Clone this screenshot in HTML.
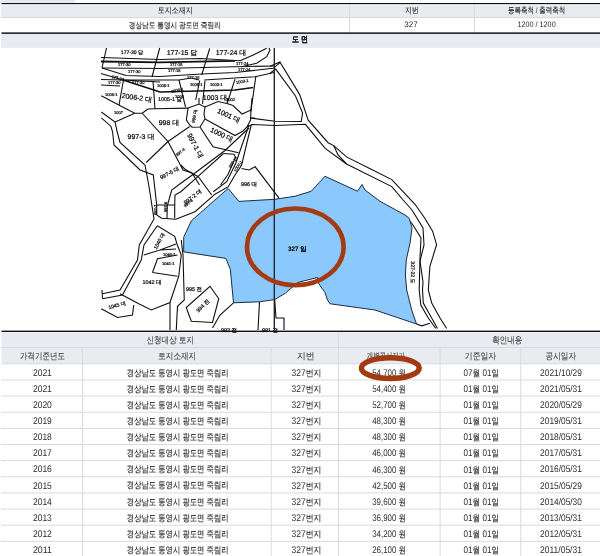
<!DOCTYPE html>
<html><head><meta charset="utf-8">
<style>
html,body{margin:0;padding:0;background:#fff;width:600px;height:556px;overflow:hidden;position:relative}
svg{position:absolute;left:0;top:0;font-family:"Liberation Sans",sans-serif;filter:blur(0.3px);text-rendering:geometricPrecision}
</style></head><body>
<svg width="600" height="556" viewBox="0 0 600 556">
<rect x="0" y="0" width="75" height="3" fill="#e7eaee"/>
<rect x="1.5" y="3.0" width="599" height="1.5" fill="#101114"/>
<rect x="1" y="4.5" width="599" height="13" fill="#e8ebef"/>
<rect x="1" y="4.5" width="599" height="1" fill="#f3f4f6"/>
<rect x="1" y="17" width="599" height="1" fill="#d7dadd"/>
<rect x="349" y="4.5" width="1" height="28" fill="#d9dbde"/>
<rect x="474" y="4.5" width="1" height="28" fill="#d9dbde"/>
<rect x="1.5" y="32.3" width="599" height="1.7" fill="#2e3034"/>
<rect x="1" y="34" width="599" height="13.8" fill="#e8ebef"/>
<rect x="1.5" y="330.6" width="599" height="1.4" fill="#101114"/>
<rect x="1.5" y="332" width="599" height="31.8" fill="#e8ebef"/>
<rect x="1.5" y="332" width="599" height="1" fill="#f1f2f5"/>
<rect x="1" y="347" width="599" height="1" fill="#d7dadd"/>
<rect x="1" y="363.3" width="599" height="1" fill="#d7dadd"/>
<rect x="1" y="379.44" width="599" height="1" fill="#d7dadd"/>
<rect x="1" y="395.58" width="599" height="1" fill="#d7dadd"/>
<rect x="1" y="411.72" width="599" height="1" fill="#d7dadd"/>
<rect x="1" y="427.86" width="599" height="1" fill="#d7dadd"/>
<rect x="1" y="444.0" width="599" height="1" fill="#d7dadd"/>
<rect x="1" y="460.14" width="599" height="1" fill="#d7dadd"/>
<rect x="1" y="476.28" width="599" height="1" fill="#d7dadd"/>
<rect x="1" y="492.42" width="599" height="1" fill="#d7dadd"/>
<rect x="1" y="508.56" width="599" height="1" fill="#d7dadd"/>
<rect x="1" y="524.7" width="599" height="1" fill="#d7dadd"/>
<rect x="1" y="540.84" width="599" height="1" fill="#d7dadd"/>
<rect x="338" y="331.9" width="1" height="224.1" fill="#d9dbde"/>
<rect x="82.1" y="347.5" width="1" height="208.5" fill="#d9dbde"/>
<rect x="270.6" y="347.5" width="1" height="208.5" fill="#d9dbde"/>
<rect x="439.6" y="347.5" width="1" height="208.5" fill="#d9dbde"/>
<rect x="520.3" y="347.5" width="1" height="208.5" fill="#d9dbde"/>
<g fill="none" stroke="#101010" stroke-width="1.1">
<!-- top road band -->
<path d="M106.5,48 L102,68"/>
<path d="M159.7,48 L152,77"/>
<path d="M209.7,48.5 L201.7,75"/>
<path d="M101,57.5 L160,59.5 L200,58.5 L240,60.8 L253.3,55 L266.7,48.3"/>
<path d="M101,61.5 L160,62.3 L235,60.8" stroke-width="1.8"/>
<path d="M102,68 L160,68.5 L235,66.7 L275,66"/>
<path d="M241.7,66.7 L256.7,63.3 L266.7,56.7 L270,50 L269,48"/>
<path d="M102,68 L126,75.5 L160,76.5 L201.7,74 L235,72.5 L273.3,68.3 L280,62.5"/>
<path d="M101,73.5 L123,80 L160,82"/>
<path d="M101,79.5 L123,80 L155,80 L179,80 L191,78 L199,80"/>
<path d="M204.3,80 L235,78 L255,76.7 L274.2,72.5"/>
<path d="M101,85 L120,86"/>
<path d="M123,80 L160,92 L235,90 L253.3,87.5" stroke-width="1.6"/>
<path d="M123.5,80 L119,105"/>
<path d="M153,81 L155,109"/>
<path d="M179,80 L185.5,107"/>
<path d="M199.7,80.7 L195.7,100"/>
<path d="M205,80.7 L202.5,104"/>
<path d="M235,79.2 L227.5,102.5"/>
<path d="M255.8,76.7 L250.8,111.7"/>
<!-- lots below road -->
<path d="M101.3,95.75 L118.8,104.9 L134.7,113.25 L142.2,113.25 L148,109"/>
<path d="M148,109 L155,108.75 L188.1,108.1"/>
<!-- 999 lot -->
<!-- 1001 lot -->
<!-- 997 lots -->
<path d="M115.1,122 L134.7,113.25"/>
<!-- 999 -->
<path d="M188.1,108.1 L199,104 L205,107 L204,114 L205,119 L200,127 L192,127.2 L189.7,125 L186.3,119.8 Z M199,98 L199,104"/>
<!-- 1001 -->
<path d="M205,107 L218,101.5 L227,103.5 L233,105.5 L242,114 L251,110 L250.5,120 L247,127 L243,131 L235,135.5 L205,119"/>
<path d="M227,103.5 L228,98 M251,110 L252,98 M250.5,118 L255,118"/>
<!-- 998/997 -->
<path d="M142.2,113.25 L168,141.5 L189.7,126.5"/>
<path d="M168,141.5 L146.25,162.5"/>
<path d="M168,141.5 L183,170 L192,173 L199.5,185"/>
<path d="M200,127 L213,146.8 L238.5,152.7"/>
<!-- diagonal road -->
<path d="M249,128 L225,150.5 L193.3,174.2 L180.8,183.3 L171.7,190 L167.5,205"/>
<path d="M223.5,153.5 L195,179.2 L180.8,191.7 L175,195 L174.7,205"/>
<path d="M223.5,153.5 L234,154.3 L235.5,157.3 L228,174.5 L220.5,185"/>
<!-- narrow road -->
<path d="M249,125 L235.5,164 L233.3,168.3 L226.7,181.7 L213.3,191.7"/>
<path d="M251.2,125 L241.5,165.5 L235,175 L228.3,186.7 L215,194.2 L195,211.7 L175.8,219.2 L161.7,218.3 L156.7,215"/>
<path d="M180.8,165 L185,169.2 L195,175 L198.3,176.7 L211.7,195"/>
<path d="M241.5,168.5 L249,170 L255.2,166.8 L279,198.2"/>
<!-- left road (upper) -->
<path d="M101.3,112 L115.1,122 L117.2,132 L120,142.5 L145,165 L148.75,185 L154,219 L139.3,245 L137.5,260 L120,290 L102.5,293.75"/>
<path d="M101.3,117.8 L110.9,126.2 L112.6,132 L114,145 L140,170 L153.3,175 L156.7,205 L156.7,215"/>
<path d="M157.3,225.7 L144,245 L141.25,260 L122.5,295 L102.5,298.75"/>
<path d="M102,290 L102.5,298.75"/>
<path d="M157.3,225.7 L174.7,236.3 L177.3,245 L181.25,255"/>
<!-- small lots -->
<path d="M156.7,205 L174.7,205 L174.7,218.3 M167.3,205 L167,218.5"/>
<!-- diagonal road through 997-1 -->
<!-- 1042 / 1040 lots -->
<path d="M120,293.75 L138.75,303.75 L151.25,310 L170,302.5 L178.75,276.25 L181.25,255"/>
<path d="M152.5,272.5 L177.5,276.25 M152.5,272.5 L157.5,258.75 L177.5,255"/>
<path d="M143.75,255 L160,250 L176,249 M160,250 L176,244"/>
<path d="M181.25,240 L183,255 L184.25,300 L177.5,306.25 L176.25,330"/>
<path d="M101.25,308.75 L117.5,317.5 L132.5,315 L133.75,305"/>
<path d="M170,302.5 L170,330"/>
<!-- 994 / 995 -->
<path d="M186.25,307.5 L210,286.25 L218.75,298.75 L212.5,322.5 L191.25,321.25 Z"/>
<path d="M233.5,302.8 L220,315 L212.5,328"/>
<path d="M259.5,301.8 L258,330"/>
<path d="M274.7,299.6 L276,318 L284,318 L284,330"/>
<!-- right road top -->
<path d="M270,66.2 L279.9,62 L299.7,94.6 L308.2,120.1 L328.1,142.7 L333.7,145.6 L346.5,156.9 L369.2,168.2 L391.8,179.6 L415,204.3 L424.5,217.7 L432.6,231.2 L436.6,244.7 L429.9,266.3 L428.3,290 L431.7,303 L440,318 L446.7,328.5"/>
<path d="M270,73.3 L275.7,69.1 L295.5,96 L302.6,113 L301.2,121.5 L275,121.3 L250.5,118"/>
<path d="M247,127 L252,124.5 L275,125.5 L305.4,124.3 L325.2,148.4 L346.5,164 L391.8,186.6 L403.1,200 L412,210 L423,228 L424,245 L420,261 L423,282 L422.5,290 L423.3,303 L430,315 L437.5,328.5"/>
<path d="M333.7,145.6 L338,155 L346.5,164"/>
<path d="M416.5,324 L421.7,325.8 L430,323.3"/>
<path d="M405,215 L413,225 L421,238 L420,258 L419.2,290 L420.8,305 L428.3,318 L435.8,328.5"/>
</g>
<g font-family="Liberation Sans, sans-serif" font-weight="normal" fill="#0a0a0a" stroke="#0a0a0a" stroke-width="0.22" font-size="5.46">
<text x="132" y="54" text-anchor="middle" font-size="5.10">177-30 답</text>
<text x="182" y="54.5" text-anchor="middle" font-size="6.99">177-15 답</text>
<text x="231" y="54.5" text-anchor="middle" font-size="6.99">177-24 대</text>
<text x="137" y="100" text-anchor="middle" font-size="6.99" transform="rotate(8 137 97)">2006-2 대</text>
<text x="170" y="101" text-anchor="middle" font-size="5.46">1005-1 답</text>
<text x="215" y="100" text-anchor="middle" font-size="6.99">1003 대</text>
<text x="229" y="118" text-anchor="middle" font-size="6.99" transform="rotate(25 229 115)">1001 대</text>
<text x="169" y="125" text-anchor="middle" font-size="6.99">998 대</text>
<text x="141" y="139" text-anchor="middle" font-size="6.99">997-3 대</text>
<text x="195" y="148" text-anchor="middle" font-size="6.99" transform="rotate(62 195 146)">997-1 대</text>
<text x="222" y="137" text-anchor="middle" font-size="6.99" transform="rotate(25 222 134)">1000 대</text>
<text x="194" y="118" text-anchor="middle" font-size="4.50" transform="rotate(-80 194 116)">999 대</text>
<text x="169" y="175" text-anchor="middle" font-size="5.46" transform="rotate(-28 169 172)">997-5 대</text>
<text x="249" y="186" text-anchor="middle" font-size="5.46">996 대</text>
<text x="192" y="199" text-anchor="middle" font-size="5.46" transform="rotate(-38 192 196)">997-2 대</text>
<text x="159" y="243" text-anchor="middle" font-size="5.10" transform="rotate(-62 159 241)">1040 대</text>
<text x="152" y="284" text-anchor="middle" font-size="5.46">1042 대</text>
<text x="117" y="307" text-anchor="middle" font-size="5.10" transform="rotate(-15 117 305)">1045 대</text>
<text x="194" y="291" text-anchor="middle" font-size="5.46">995 전</text>
<text x="202" y="308" text-anchor="middle" font-size="5.46" transform="rotate(-45 202 305)">994 전</text>
<text x="297" y="251.5" text-anchor="middle" font-size="6.55">327 임</text>
<text x="414.5" y="273" text-anchor="middle" font-size="5.10" transform="rotate(90 413 271)">327-22 도</text>
<text x="229" y="332" text-anchor="middle" font-size="5.46">993 전</text>
<text x="270" y="332" text-anchor="middle" font-size="5.46">991 전</text>
<g font-size="4.05">
<text x="118" y="66">177-30</text><text x="170" y="65.5">177-15</text><text x="236" y="65">177-24</text>
<text x="128" y="72.5">177-30</text><text x="168" y="72">177-15</text><text x="238" y="71">177-24</text>
<text x="112" y="78" transform="rotate(15 112 76)">177-30</text><text x="187" y="79">177-15</text>
<text x="108" y="83.5">177-30</text><text x="132" y="84">177-30</text><text x="157" y="87">1005-1</text>
<text x="190" y="86">1005-1</text><text x="236" y="84" transform="rotate(-10 236 82)">1003-1</text>
<text x="105" y="96">1006-1</text><text x="171" y="93" transform="rotate(-12 171 91)">1006-1</text>
<text x="210" y="86">1003-1</text><text x="226" y="101">1002</text><text x="175" y="98">1005</text>
<text x="114" y="113.5">1007</text>
<text x="176" y="157" transform="rotate(-40 176 155)">997-4</text>
<text x="184" y="208" transform="rotate(-40 184 206)">997-6</text>
<text x="157" y="215" transform="rotate(-90 157 215)">997-7</text>
<text x="167" y="212" transform="rotate(-90 167 212)">997-8</text>
<text x="163" y="256">1040-1</text><text x="162" y="265">1041-1</text>
<text x="234" y="173" transform="rotate(-55 234 171)">1000-1</text>
<text x="229" y="169" transform="rotate(-55 229 167)">997-10</text>
</g>
</g>

<polygon fill="#8bc9fc" stroke="#1b2b44" stroke-width="1" points="228.1,188.4 238.9,201.4 274.7,199.3 295,196.25 311.25,191.25 325,176.25 357.5,191.25 362,184.5 365,190 380,201.25 405,215 409.2,218.3 412,227.7 410.1,242.8 406.3,259.8 405.4,274.9 406.7,290 411.7,310 416.5,324 375,310 330,303.75 327.5,300 325,292.5 318.75,283.75 317.5,277.5 297.5,282.5 285.5,293.1 274.7,299.6 259.5,301.8 233.5,302.8 230.3,269.3 225.9,258.4 183.7,251.9 183.7,237.2 191.3,220.9"/>
<line x1="274.3" y1="48" x2="274.3" y2="328.5" stroke="#1a2230" stroke-width="1.35"/>
<text x="297.2" y="250.8" text-anchor="middle" font-size="6.4" font-weight="bold" fill="#0a1018" stroke="#0a1018" stroke-width="0.12" textLength="18.6" lengthAdjust="spacingAndGlyphs">327 임</text>
<ellipse cx="295.3" cy="246.9" rx="48.3" ry="38.4" fill="none" stroke="#a33a12" stroke-width="4.6"/>
<g font-family="Liberation Sans, sans-serif">
<text x="175.3" y="12.9" text-anchor="middle" font-size="8" fill="#2c2c2c" font-weight="normal" textLength="35.0" lengthAdjust="spacingAndGlyphs"><tspan font-size="8.2" font-weight="normal" stroke="#2c2c2c" stroke-width="0.14">토지소재지</tspan></text>
<text x="411.9" y="12.9" text-anchor="middle" font-size="8" fill="#2c2c2c" font-weight="normal" textLength="13.2" lengthAdjust="spacingAndGlyphs"><tspan font-size="8.2" font-weight="normal" stroke="#2c2c2c" stroke-width="0.14">지번</tspan></text>
<text x="536.6" y="12.9" text-anchor="middle" font-size="8" fill="#2c2c2c" font-weight="normal" textLength="57.2" lengthAdjust="spacingAndGlyphs"><tspan font-size="8.2" font-weight="normal" stroke="#2c2c2c" stroke-width="0.14">등록축척</tspan> / <tspan font-size="8.2" font-weight="normal" stroke="#2c2c2c" stroke-width="0.14">출력축척</tspan></text>
<text x="174.8" y="27.5" text-anchor="middle" font-size="8" fill="#2c2c2c" font-weight="normal" textLength="92.0" lengthAdjust="spacingAndGlyphs"><tspan font-size="8.2" font-weight="normal" stroke="#2c2c2c" stroke-width="0.14">경상남도</tspan> <tspan font-size="8.2" font-weight="normal" stroke="#2c2c2c" stroke-width="0.14">통영시</tspan> <tspan font-size="8.2" font-weight="normal" stroke="#2c2c2c" stroke-width="0.14">광도면</tspan> <tspan font-size="8.2" font-weight="normal" stroke="#2c2c2c" stroke-width="0.14">죽림리</tspan></text>
<text x="411.0" y="27.2" text-anchor="middle" font-size="8" fill="#2c2c2c" font-weight="normal" textLength="13.4" lengthAdjust="spacingAndGlyphs">327</text>
<text x="536.6" y="27.2" text-anchor="middle" font-size="8" fill="#2c2c2c" font-weight="normal" textLength="38.1" lengthAdjust="spacingAndGlyphs">1200 / 1200</text>
<text x="300.0" y="42.2" text-anchor="middle" font-size="8" fill="#222" font-weight="bold" textLength="15.8" lengthAdjust="spacingAndGlyphs"><tspan font-size="8.2" font-weight="bold" stroke="#222" stroke-width="0.14">도</tspan> <tspan font-size="8.2" font-weight="bold" stroke="#222" stroke-width="0.14">면</tspan></text>
<text x="170.3" y="342.7" text-anchor="middle" font-size="10" fill="#4a4a4a" font-weight="normal" textLength="47.4" lengthAdjust="spacingAndGlyphs"><tspan font-size="9" font-weight="normal" stroke="#4a4a4a" stroke-width="0.14">신청대상</tspan> <tspan font-size="9" font-weight="normal" stroke="#4a4a4a" stroke-width="0.14">토지</tspan></text>
<text x="507.2" y="342.7" text-anchor="middle" font-size="10" fill="#4a4a4a" font-weight="normal" textLength="29.8" lengthAdjust="spacingAndGlyphs"><tspan font-size="9" font-weight="normal" stroke="#4a4a4a" stroke-width="0.14">확인내용</tspan></text>
<text x="42.5" y="359.4" text-anchor="middle" font-size="10" fill="#4a4a4a" font-weight="normal" textLength="44.8" lengthAdjust="spacingAndGlyphs"><tspan font-size="9" font-weight="normal" stroke="#4a4a4a" stroke-width="0.14">가격기준년도</tspan></text>
<text x="177.2" y="359.4" text-anchor="middle" font-size="10" fill="#4a4a4a" font-weight="normal" textLength="38.0" lengthAdjust="spacingAndGlyphs"><tspan font-size="9" font-weight="normal" stroke="#4a4a4a" stroke-width="0.14">토지소재지</tspan></text>
<text x="305.7" y="359.4" text-anchor="middle" font-size="10" fill="#4a4a4a" font-weight="normal" textLength="17.6" lengthAdjust="spacingAndGlyphs"><tspan font-size="9" font-weight="normal" stroke="#4a4a4a" stroke-width="0.14">지번</tspan></text>
<text x="386" y="359.4" text-anchor="middle" font-size="10" fill="#4a4a4a" font-weight="normal" textLength="38.3" lengthAdjust="spacingAndGlyphs"><tspan font-size="9" font-weight="normal" stroke="#4a4a4a" stroke-width="0.14">개별공시지가</tspan></text>
<text x="480.5" y="359.4" text-anchor="middle" font-size="10" fill="#4a4a4a" font-weight="normal" textLength="31.3" lengthAdjust="spacingAndGlyphs"><tspan font-size="9" font-weight="normal" stroke="#4a4a4a" stroke-width="0.14">기준일자</tspan></text>
<text x="560.8" y="359.4" text-anchor="middle" font-size="10" fill="#4a4a4a" font-weight="normal" textLength="30.6" lengthAdjust="spacingAndGlyphs"><tspan font-size="9" font-weight="normal" stroke="#4a4a4a" stroke-width="0.14">공시일자</tspan></text>
<text x="42.4" y="375.6" text-anchor="middle" font-size="9.6" fill="#2c2c2c" font-weight="normal" textLength="18.9" lengthAdjust="spacingAndGlyphs">2021</text>
<text x="177.7" y="375.5" text-anchor="middle" font-size="9.6" fill="#2c2c2c" font-weight="normal" textLength="101.8" lengthAdjust="spacingAndGlyphs"><tspan font-size="9" font-weight="normal" stroke="#2c2c2c" stroke-width="0.14">경상남도</tspan> <tspan font-size="9" font-weight="normal" stroke="#2c2c2c" stroke-width="0.14">통영시</tspan> <tspan font-size="9" font-weight="normal" stroke="#2c2c2c" stroke-width="0.14">광도면</tspan> <tspan font-size="9" font-weight="normal" stroke="#2c2c2c" stroke-width="0.14">죽림리</tspan></text>
<text x="306.5" y="375.70000000000005" text-anchor="middle" font-size="9.6" fill="#2c2c2c" font-weight="normal" textLength="29.8" lengthAdjust="spacingAndGlyphs">327<tspan font-size="9" font-weight="normal" stroke="#2c2c2c" stroke-width="0.14">번지</tspan></text>
<text x="389.1" y="375.70000000000005" text-anchor="middle" font-size="9.6" fill="#2c2c2c" font-weight="normal" textLength="33.8" lengthAdjust="spacingAndGlyphs">54,700 <tspan font-size="9" font-weight="normal" stroke="#2c2c2c" stroke-width="0.14">원</tspan></text>
<text x="481.3" y="375.70000000000005" text-anchor="middle" font-size="9.6" fill="#2c2c2c" font-weight="normal" textLength="35.4" lengthAdjust="spacingAndGlyphs">07<tspan font-size="9" font-weight="normal" stroke="#2c2c2c" stroke-width="0.14">월</tspan> 01<tspan font-size="9" font-weight="normal" stroke="#2c2c2c" stroke-width="0.14">일</tspan></text>
<text x="561.0" y="375.6" text-anchor="middle" font-size="9.6" fill="#2c2c2c" font-weight="normal" textLength="41.8" lengthAdjust="spacingAndGlyphs">2021/10/29</text>
<text x="42.4" y="391.74" text-anchor="middle" font-size="9.6" fill="#2c2c2c" font-weight="normal" textLength="18.9" lengthAdjust="spacingAndGlyphs">2021</text>
<text x="177.7" y="391.64" text-anchor="middle" font-size="9.6" fill="#2c2c2c" font-weight="normal" textLength="101.8" lengthAdjust="spacingAndGlyphs"><tspan font-size="9" font-weight="normal" stroke="#2c2c2c" stroke-width="0.14">경상남도</tspan> <tspan font-size="9" font-weight="normal" stroke="#2c2c2c" stroke-width="0.14">통영시</tspan> <tspan font-size="9" font-weight="normal" stroke="#2c2c2c" stroke-width="0.14">광도면</tspan> <tspan font-size="9" font-weight="normal" stroke="#2c2c2c" stroke-width="0.14">죽림리</tspan></text>
<text x="306.5" y="391.84000000000003" text-anchor="middle" font-size="9.6" fill="#2c2c2c" font-weight="normal" textLength="29.8" lengthAdjust="spacingAndGlyphs">327<tspan font-size="9" font-weight="normal" stroke="#2c2c2c" stroke-width="0.14">번지</tspan></text>
<text x="389.1" y="391.84000000000003" text-anchor="middle" font-size="9.6" fill="#2c2c2c" font-weight="normal" textLength="33.8" lengthAdjust="spacingAndGlyphs">54,400 <tspan font-size="9" font-weight="normal" stroke="#2c2c2c" stroke-width="0.14">원</tspan></text>
<text x="481.3" y="391.84000000000003" text-anchor="middle" font-size="9.6" fill="#2c2c2c" font-weight="normal" textLength="35.4" lengthAdjust="spacingAndGlyphs">01<tspan font-size="9" font-weight="normal" stroke="#2c2c2c" stroke-width="0.14">월</tspan> 01<tspan font-size="9" font-weight="normal" stroke="#2c2c2c" stroke-width="0.14">일</tspan></text>
<text x="561.0" y="391.74" text-anchor="middle" font-size="9.6" fill="#2c2c2c" font-weight="normal" textLength="41.8" lengthAdjust="spacingAndGlyphs">2021/05/31</text>
<text x="42.4" y="407.88" text-anchor="middle" font-size="9.6" fill="#2c2c2c" font-weight="normal" textLength="18.9" lengthAdjust="spacingAndGlyphs">2020</text>
<text x="177.7" y="407.78" text-anchor="middle" font-size="9.6" fill="#2c2c2c" font-weight="normal" textLength="101.8" lengthAdjust="spacingAndGlyphs"><tspan font-size="9" font-weight="normal" stroke="#2c2c2c" stroke-width="0.14">경상남도</tspan> <tspan font-size="9" font-weight="normal" stroke="#2c2c2c" stroke-width="0.14">통영시</tspan> <tspan font-size="9" font-weight="normal" stroke="#2c2c2c" stroke-width="0.14">광도면</tspan> <tspan font-size="9" font-weight="normal" stroke="#2c2c2c" stroke-width="0.14">죽림리</tspan></text>
<text x="306.5" y="407.98" text-anchor="middle" font-size="9.6" fill="#2c2c2c" font-weight="normal" textLength="29.8" lengthAdjust="spacingAndGlyphs">327<tspan font-size="9" font-weight="normal" stroke="#2c2c2c" stroke-width="0.14">번지</tspan></text>
<text x="389.1" y="407.98" text-anchor="middle" font-size="9.6" fill="#2c2c2c" font-weight="normal" textLength="33.8" lengthAdjust="spacingAndGlyphs">52,700 <tspan font-size="9" font-weight="normal" stroke="#2c2c2c" stroke-width="0.14">원</tspan></text>
<text x="481.3" y="407.98" text-anchor="middle" font-size="9.6" fill="#2c2c2c" font-weight="normal" textLength="35.4" lengthAdjust="spacingAndGlyphs">01<tspan font-size="9" font-weight="normal" stroke="#2c2c2c" stroke-width="0.14">월</tspan> 01<tspan font-size="9" font-weight="normal" stroke="#2c2c2c" stroke-width="0.14">일</tspan></text>
<text x="561.0" y="407.88" text-anchor="middle" font-size="9.6" fill="#2c2c2c" font-weight="normal" textLength="41.8" lengthAdjust="spacingAndGlyphs">2020/05/29</text>
<text x="42.4" y="424.02" text-anchor="middle" font-size="9.6" fill="#2c2c2c" font-weight="normal" textLength="18.9" lengthAdjust="spacingAndGlyphs">2019</text>
<text x="177.7" y="423.91999999999996" text-anchor="middle" font-size="9.6" fill="#2c2c2c" font-weight="normal" textLength="101.8" lengthAdjust="spacingAndGlyphs"><tspan font-size="9" font-weight="normal" stroke="#2c2c2c" stroke-width="0.14">경상남도</tspan> <tspan font-size="9" font-weight="normal" stroke="#2c2c2c" stroke-width="0.14">통영시</tspan> <tspan font-size="9" font-weight="normal" stroke="#2c2c2c" stroke-width="0.14">광도면</tspan> <tspan font-size="9" font-weight="normal" stroke="#2c2c2c" stroke-width="0.14">죽림리</tspan></text>
<text x="306.5" y="424.12" text-anchor="middle" font-size="9.6" fill="#2c2c2c" font-weight="normal" textLength="29.8" lengthAdjust="spacingAndGlyphs">327<tspan font-size="9" font-weight="normal" stroke="#2c2c2c" stroke-width="0.14">번지</tspan></text>
<text x="389.1" y="424.12" text-anchor="middle" font-size="9.6" fill="#2c2c2c" font-weight="normal" textLength="33.8" lengthAdjust="spacingAndGlyphs">48,300 <tspan font-size="9" font-weight="normal" stroke="#2c2c2c" stroke-width="0.14">원</tspan></text>
<text x="481.3" y="424.12" text-anchor="middle" font-size="9.6" fill="#2c2c2c" font-weight="normal" textLength="35.4" lengthAdjust="spacingAndGlyphs">01<tspan font-size="9" font-weight="normal" stroke="#2c2c2c" stroke-width="0.14">월</tspan> 01<tspan font-size="9" font-weight="normal" stroke="#2c2c2c" stroke-width="0.14">일</tspan></text>
<text x="561.0" y="424.02" text-anchor="middle" font-size="9.6" fill="#2c2c2c" font-weight="normal" textLength="41.8" lengthAdjust="spacingAndGlyphs">2019/05/31</text>
<text x="42.4" y="440.16" text-anchor="middle" font-size="9.6" fill="#2c2c2c" font-weight="normal" textLength="18.9" lengthAdjust="spacingAndGlyphs">2018</text>
<text x="177.7" y="440.06" text-anchor="middle" font-size="9.6" fill="#2c2c2c" font-weight="normal" textLength="101.8" lengthAdjust="spacingAndGlyphs"><tspan font-size="9" font-weight="normal" stroke="#2c2c2c" stroke-width="0.14">경상남도</tspan> <tspan font-size="9" font-weight="normal" stroke="#2c2c2c" stroke-width="0.14">통영시</tspan> <tspan font-size="9" font-weight="normal" stroke="#2c2c2c" stroke-width="0.14">광도면</tspan> <tspan font-size="9" font-weight="normal" stroke="#2c2c2c" stroke-width="0.14">죽림리</tspan></text>
<text x="306.5" y="440.26000000000005" text-anchor="middle" font-size="9.6" fill="#2c2c2c" font-weight="normal" textLength="29.8" lengthAdjust="spacingAndGlyphs">327<tspan font-size="9" font-weight="normal" stroke="#2c2c2c" stroke-width="0.14">번지</tspan></text>
<text x="389.1" y="440.26000000000005" text-anchor="middle" font-size="9.6" fill="#2c2c2c" font-weight="normal" textLength="33.8" lengthAdjust="spacingAndGlyphs">48,300 <tspan font-size="9" font-weight="normal" stroke="#2c2c2c" stroke-width="0.14">원</tspan></text>
<text x="481.3" y="440.26000000000005" text-anchor="middle" font-size="9.6" fill="#2c2c2c" font-weight="normal" textLength="35.4" lengthAdjust="spacingAndGlyphs">01<tspan font-size="9" font-weight="normal" stroke="#2c2c2c" stroke-width="0.14">월</tspan> 01<tspan font-size="9" font-weight="normal" stroke="#2c2c2c" stroke-width="0.14">일</tspan></text>
<text x="561.0" y="440.16" text-anchor="middle" font-size="9.6" fill="#2c2c2c" font-weight="normal" textLength="41.8" lengthAdjust="spacingAndGlyphs">2018/05/31</text>
<text x="42.4" y="456.3" text-anchor="middle" font-size="9.6" fill="#2c2c2c" font-weight="normal" textLength="18.9" lengthAdjust="spacingAndGlyphs">2017</text>
<text x="177.7" y="456.2" text-anchor="middle" font-size="9.6" fill="#2c2c2c" font-weight="normal" textLength="101.8" lengthAdjust="spacingAndGlyphs"><tspan font-size="9" font-weight="normal" stroke="#2c2c2c" stroke-width="0.14">경상남도</tspan> <tspan font-size="9" font-weight="normal" stroke="#2c2c2c" stroke-width="0.14">통영시</tspan> <tspan font-size="9" font-weight="normal" stroke="#2c2c2c" stroke-width="0.14">광도면</tspan> <tspan font-size="9" font-weight="normal" stroke="#2c2c2c" stroke-width="0.14">죽림리</tspan></text>
<text x="306.5" y="456.40000000000003" text-anchor="middle" font-size="9.6" fill="#2c2c2c" font-weight="normal" textLength="29.8" lengthAdjust="spacingAndGlyphs">327<tspan font-size="9" font-weight="normal" stroke="#2c2c2c" stroke-width="0.14">번지</tspan></text>
<text x="389.1" y="456.40000000000003" text-anchor="middle" font-size="9.6" fill="#2c2c2c" font-weight="normal" textLength="33.8" lengthAdjust="spacingAndGlyphs">46,000 <tspan font-size="9" font-weight="normal" stroke="#2c2c2c" stroke-width="0.14">원</tspan></text>
<text x="481.3" y="456.40000000000003" text-anchor="middle" font-size="9.6" fill="#2c2c2c" font-weight="normal" textLength="35.4" lengthAdjust="spacingAndGlyphs">01<tspan font-size="9" font-weight="normal" stroke="#2c2c2c" stroke-width="0.14">월</tspan> 01<tspan font-size="9" font-weight="normal" stroke="#2c2c2c" stroke-width="0.14">일</tspan></text>
<text x="561.0" y="456.3" text-anchor="middle" font-size="9.6" fill="#2c2c2c" font-weight="normal" textLength="41.8" lengthAdjust="spacingAndGlyphs">2017/05/31</text>
<text x="42.4" y="472.44" text-anchor="middle" font-size="9.6" fill="#2c2c2c" font-weight="normal" textLength="18.9" lengthAdjust="spacingAndGlyphs">2016</text>
<text x="177.7" y="472.34" text-anchor="middle" font-size="9.6" fill="#2c2c2c" font-weight="normal" textLength="101.8" lengthAdjust="spacingAndGlyphs"><tspan font-size="9" font-weight="normal" stroke="#2c2c2c" stroke-width="0.14">경상남도</tspan> <tspan font-size="9" font-weight="normal" stroke="#2c2c2c" stroke-width="0.14">통영시</tspan> <tspan font-size="9" font-weight="normal" stroke="#2c2c2c" stroke-width="0.14">광도면</tspan> <tspan font-size="9" font-weight="normal" stroke="#2c2c2c" stroke-width="0.14">죽림리</tspan></text>
<text x="306.5" y="472.54" text-anchor="middle" font-size="9.6" fill="#2c2c2c" font-weight="normal" textLength="29.8" lengthAdjust="spacingAndGlyphs">327<tspan font-size="9" font-weight="normal" stroke="#2c2c2c" stroke-width="0.14">번지</tspan></text>
<text x="389.1" y="472.54" text-anchor="middle" font-size="9.6" fill="#2c2c2c" font-weight="normal" textLength="33.8" lengthAdjust="spacingAndGlyphs">46,300 <tspan font-size="9" font-weight="normal" stroke="#2c2c2c" stroke-width="0.14">원</tspan></text>
<text x="481.3" y="472.54" text-anchor="middle" font-size="9.6" fill="#2c2c2c" font-weight="normal" textLength="35.4" lengthAdjust="spacingAndGlyphs">01<tspan font-size="9" font-weight="normal" stroke="#2c2c2c" stroke-width="0.14">월</tspan> 01<tspan font-size="9" font-weight="normal" stroke="#2c2c2c" stroke-width="0.14">일</tspan></text>
<text x="561.0" y="472.44" text-anchor="middle" font-size="9.6" fill="#2c2c2c" font-weight="normal" textLength="41.8" lengthAdjust="spacingAndGlyphs">2016/05/31</text>
<text x="42.4" y="488.58" text-anchor="middle" font-size="9.6" fill="#2c2c2c" font-weight="normal" textLength="18.9" lengthAdjust="spacingAndGlyphs">2015</text>
<text x="177.7" y="488.47999999999996" text-anchor="middle" font-size="9.6" fill="#2c2c2c" font-weight="normal" textLength="101.8" lengthAdjust="spacingAndGlyphs"><tspan font-size="9" font-weight="normal" stroke="#2c2c2c" stroke-width="0.14">경상남도</tspan> <tspan font-size="9" font-weight="normal" stroke="#2c2c2c" stroke-width="0.14">통영시</tspan> <tspan font-size="9" font-weight="normal" stroke="#2c2c2c" stroke-width="0.14">광도면</tspan> <tspan font-size="9" font-weight="normal" stroke="#2c2c2c" stroke-width="0.14">죽림리</tspan></text>
<text x="306.5" y="488.68" text-anchor="middle" font-size="9.6" fill="#2c2c2c" font-weight="normal" textLength="29.8" lengthAdjust="spacingAndGlyphs">327<tspan font-size="9" font-weight="normal" stroke="#2c2c2c" stroke-width="0.14">번지</tspan></text>
<text x="389.1" y="488.68" text-anchor="middle" font-size="9.6" fill="#2c2c2c" font-weight="normal" textLength="33.8" lengthAdjust="spacingAndGlyphs">42,500 <tspan font-size="9" font-weight="normal" stroke="#2c2c2c" stroke-width="0.14">원</tspan></text>
<text x="481.3" y="488.68" text-anchor="middle" font-size="9.6" fill="#2c2c2c" font-weight="normal" textLength="35.4" lengthAdjust="spacingAndGlyphs">01<tspan font-size="9" font-weight="normal" stroke="#2c2c2c" stroke-width="0.14">월</tspan> 01<tspan font-size="9" font-weight="normal" stroke="#2c2c2c" stroke-width="0.14">일</tspan></text>
<text x="561.0" y="488.58" text-anchor="middle" font-size="9.6" fill="#2c2c2c" font-weight="normal" textLength="41.8" lengthAdjust="spacingAndGlyphs">2015/05/29</text>
<text x="42.4" y="504.72" text-anchor="middle" font-size="9.6" fill="#2c2c2c" font-weight="normal" textLength="18.9" lengthAdjust="spacingAndGlyphs">2014</text>
<text x="177.7" y="504.62" text-anchor="middle" font-size="9.6" fill="#2c2c2c" font-weight="normal" textLength="101.8" lengthAdjust="spacingAndGlyphs"><tspan font-size="9" font-weight="normal" stroke="#2c2c2c" stroke-width="0.14">경상남도</tspan> <tspan font-size="9" font-weight="normal" stroke="#2c2c2c" stroke-width="0.14">통영시</tspan> <tspan font-size="9" font-weight="normal" stroke="#2c2c2c" stroke-width="0.14">광도면</tspan> <tspan font-size="9" font-weight="normal" stroke="#2c2c2c" stroke-width="0.14">죽림리</tspan></text>
<text x="306.5" y="504.82000000000005" text-anchor="middle" font-size="9.6" fill="#2c2c2c" font-weight="normal" textLength="29.8" lengthAdjust="spacingAndGlyphs">327<tspan font-size="9" font-weight="normal" stroke="#2c2c2c" stroke-width="0.14">번지</tspan></text>
<text x="389.1" y="504.82000000000005" text-anchor="middle" font-size="9.6" fill="#2c2c2c" font-weight="normal" textLength="33.8" lengthAdjust="spacingAndGlyphs">39,600 <tspan font-size="9" font-weight="normal" stroke="#2c2c2c" stroke-width="0.14">원</tspan></text>
<text x="481.3" y="504.82000000000005" text-anchor="middle" font-size="9.6" fill="#2c2c2c" font-weight="normal" textLength="35.4" lengthAdjust="spacingAndGlyphs">01<tspan font-size="9" font-weight="normal" stroke="#2c2c2c" stroke-width="0.14">월</tspan> 01<tspan font-size="9" font-weight="normal" stroke="#2c2c2c" stroke-width="0.14">일</tspan></text>
<text x="561.0" y="504.72" text-anchor="middle" font-size="9.6" fill="#2c2c2c" font-weight="normal" textLength="41.8" lengthAdjust="spacingAndGlyphs">2014/05/30</text>
<text x="42.4" y="520.86" text-anchor="middle" font-size="9.6" fill="#2c2c2c" font-weight="normal" textLength="18.9" lengthAdjust="spacingAndGlyphs">2013</text>
<text x="177.7" y="520.76" text-anchor="middle" font-size="9.6" fill="#2c2c2c" font-weight="normal" textLength="101.8" lengthAdjust="spacingAndGlyphs"><tspan font-size="9" font-weight="normal" stroke="#2c2c2c" stroke-width="0.14">경상남도</tspan> <tspan font-size="9" font-weight="normal" stroke="#2c2c2c" stroke-width="0.14">통영시</tspan> <tspan font-size="9" font-weight="normal" stroke="#2c2c2c" stroke-width="0.14">광도면</tspan> <tspan font-size="9" font-weight="normal" stroke="#2c2c2c" stroke-width="0.14">죽림리</tspan></text>
<text x="306.5" y="520.96" text-anchor="middle" font-size="9.6" fill="#2c2c2c" font-weight="normal" textLength="29.8" lengthAdjust="spacingAndGlyphs">327<tspan font-size="9" font-weight="normal" stroke="#2c2c2c" stroke-width="0.14">번지</tspan></text>
<text x="389.1" y="520.96" text-anchor="middle" font-size="9.6" fill="#2c2c2c" font-weight="normal" textLength="33.8" lengthAdjust="spacingAndGlyphs">36,900 <tspan font-size="9" font-weight="normal" stroke="#2c2c2c" stroke-width="0.14">원</tspan></text>
<text x="481.3" y="520.96" text-anchor="middle" font-size="9.6" fill="#2c2c2c" font-weight="normal" textLength="35.4" lengthAdjust="spacingAndGlyphs">01<tspan font-size="9" font-weight="normal" stroke="#2c2c2c" stroke-width="0.14">월</tspan> 01<tspan font-size="9" font-weight="normal" stroke="#2c2c2c" stroke-width="0.14">일</tspan></text>
<text x="561.0" y="520.86" text-anchor="middle" font-size="9.6" fill="#2c2c2c" font-weight="normal" textLength="41.8" lengthAdjust="spacingAndGlyphs">2013/05/31</text>
<text x="42.4" y="537.0" text-anchor="middle" font-size="9.6" fill="#2c2c2c" font-weight="normal" textLength="18.9" lengthAdjust="spacingAndGlyphs">2012</text>
<text x="177.7" y="536.9" text-anchor="middle" font-size="9.6" fill="#2c2c2c" font-weight="normal" textLength="101.8" lengthAdjust="spacingAndGlyphs"><tspan font-size="9" font-weight="normal" stroke="#2c2c2c" stroke-width="0.14">경상남도</tspan> <tspan font-size="9" font-weight="normal" stroke="#2c2c2c" stroke-width="0.14">통영시</tspan> <tspan font-size="9" font-weight="normal" stroke="#2c2c2c" stroke-width="0.14">광도면</tspan> <tspan font-size="9" font-weight="normal" stroke="#2c2c2c" stroke-width="0.14">죽림리</tspan></text>
<text x="306.5" y="537.1" text-anchor="middle" font-size="9.6" fill="#2c2c2c" font-weight="normal" textLength="29.8" lengthAdjust="spacingAndGlyphs">327<tspan font-size="9" font-weight="normal" stroke="#2c2c2c" stroke-width="0.14">번지</tspan></text>
<text x="389.1" y="537.1" text-anchor="middle" font-size="9.6" fill="#2c2c2c" font-weight="normal" textLength="33.8" lengthAdjust="spacingAndGlyphs">34,200 <tspan font-size="9" font-weight="normal" stroke="#2c2c2c" stroke-width="0.14">원</tspan></text>
<text x="481.3" y="537.1" text-anchor="middle" font-size="9.6" fill="#2c2c2c" font-weight="normal" textLength="35.4" lengthAdjust="spacingAndGlyphs">01<tspan font-size="9" font-weight="normal" stroke="#2c2c2c" stroke-width="0.14">월</tspan> 01<tspan font-size="9" font-weight="normal" stroke="#2c2c2c" stroke-width="0.14">일</tspan></text>
<text x="561.0" y="537.0" text-anchor="middle" font-size="9.6" fill="#2c2c2c" font-weight="normal" textLength="41.8" lengthAdjust="spacingAndGlyphs">2012/05/31</text>
<text x="42.4" y="553.14" text-anchor="middle" font-size="9.6" fill="#2c2c2c" font-weight="normal" textLength="18.9" lengthAdjust="spacingAndGlyphs">2011</text>
<text x="177.7" y="553.04" text-anchor="middle" font-size="9.6" fill="#2c2c2c" font-weight="normal" textLength="101.8" lengthAdjust="spacingAndGlyphs"><tspan font-size="9" font-weight="normal" stroke="#2c2c2c" stroke-width="0.14">경상남도</tspan> <tspan font-size="9" font-weight="normal" stroke="#2c2c2c" stroke-width="0.14">통영시</tspan> <tspan font-size="9" font-weight="normal" stroke="#2c2c2c" stroke-width="0.14">광도면</tspan> <tspan font-size="9" font-weight="normal" stroke="#2c2c2c" stroke-width="0.14">죽림리</tspan></text>
<text x="306.5" y="553.24" text-anchor="middle" font-size="9.6" fill="#2c2c2c" font-weight="normal" textLength="29.8" lengthAdjust="spacingAndGlyphs">327<tspan font-size="9" font-weight="normal" stroke="#2c2c2c" stroke-width="0.14">번지</tspan></text>
<text x="389.1" y="553.24" text-anchor="middle" font-size="9.6" fill="#2c2c2c" font-weight="normal" textLength="33.8" lengthAdjust="spacingAndGlyphs">26,100 <tspan font-size="9" font-weight="normal" stroke="#2c2c2c" stroke-width="0.14">원</tspan></text>
<text x="481.3" y="553.24" text-anchor="middle" font-size="9.6" fill="#2c2c2c" font-weight="normal" textLength="35.4" lengthAdjust="spacingAndGlyphs">01<tspan font-size="9" font-weight="normal" stroke="#2c2c2c" stroke-width="0.14">월</tspan> 01<tspan font-size="9" font-weight="normal" stroke="#2c2c2c" stroke-width="0.14">일</tspan></text>
<text x="561.0" y="553.14" text-anchor="middle" font-size="9.6" fill="#2c2c2c" font-weight="normal" textLength="41.8" lengthAdjust="spacingAndGlyphs">2011/05/31</text>
</g>
<ellipse cx="390.3" cy="368.1" rx="28.9" ry="10.4" fill="none" stroke="#a33a12" stroke-width="5.5"/>
</svg>
</body></html>
